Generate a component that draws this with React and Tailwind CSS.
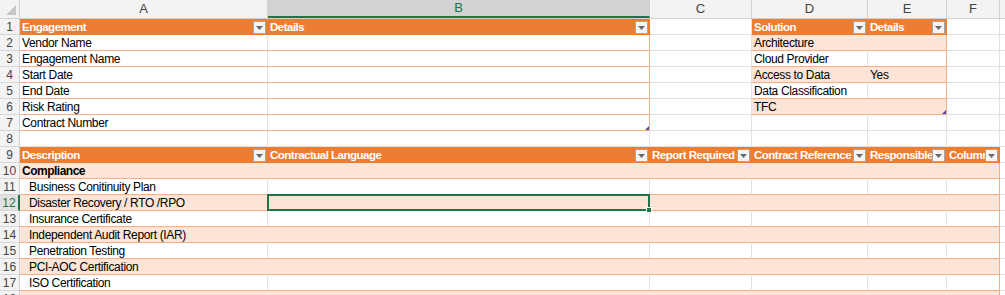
import React from "react";

const widths = ["w-[248px]", "w-[382px]", "w-[102px]", "w-[116px]", "w-[79px]", "w-[53px]"];
const letters = ["A", "B", "C", "D", "E", "F"];

const plain = { fill: "bg-white", right: "border-r-[#e1e1e1]", bottom: "border-b-[#e1e1e1]" };

const head = (text) => ({
  text,
  head: true,
  fill: "bg-[#ed7d31]",
  right: "border-r-[#ed7d31]",
  bottom: "border-b-[#ed7d31]",
});

const band = (on, last, text, extra = {}) => ({
  text,
  fill: on ? "bg-[#fce4d6]" : "bg-white",
  right: last ? "border-r-[#f4b084]" : on ? "border-r-[#fce4d6]" : "border-r-[#e1e1e1]",
  bottom: "border-b-[#f4b084]",
  ...extra,
});

const engagement = ["Vendor Name", "Engagement Name", "Start Date", "End Date", "Risk Rating", "Contract Number"];
const solution = [["Architecture", ""], ["Cloud Provider", ""], ["Access to Data", "Yes"], ["Data Classification", ""], ["TFC", ""]];
const items = [
  "Business Conitinuity Plan",
  "Disaster Recovery / RTO /RPO",
  "Insurance Certificate",
  "Independent Audit Report (IAR)",
  "Penetration Testing",
  "PCI-AOC Certification",
  "ISO Certification",
  "",
];

function buildRows() {
  const rows = [];
  rows.push([head("Engagement"), head("Details"), plain, head("Solution"), head("Details"), plain]);
  engagement.forEach((t, i) => {
    const s = solution[i];
    const on = i % 2 === 0;
    rows.push([
      band(false, false, t),
      band(false, true, "", i === 5 ? { grip: true } : {}),
      plain,
      s ? band(on, false, s[0]) : plain,
      s ? band(on, true, s[1], i === 4 ? { grip: true } : {}) : plain,
      plain,
    ]);
  });
  rows.push([plain, plain, plain, plain, plain, plain]);
  rows.push(["Description", "Contractual Language", "Report Required", "Contract Reference", "Responsible", "Column1"].map(head));
  rows.push([0, 1, 2, 3, 4, 5].map((c) => band(true, c === 5, c === 0 ? "Compliance" : "", { bold: true })));
  items.forEach((t, i) => {
    const on = i % 2 === 1;
    rows.push([0, 1, 2, 3, 4, 5].map((c) => band(on, c === 5, c === 0 ? t : "", { indent: true, selected: i === 1 && c === 1 })));
  });
  return rows;
}

const Dropdown = () => (
  <span className="absolute right-[1px] top-[2px] w-[13px] h-[13px] bg-[#f4f4f4] border border-[#a6a6a6] flex items-center justify-center">
    <svg width="7" height="4" viewBox="0 0 7 4">
      <path d="M0 0h7L3.5 4z" fill="#6a6a6a" />
    </svg>
  </span>
);

const Cell = ({ cell, col }) => (
  <div className={`${widths[col]} h-4 shrink-0 relative box-border border-r border-b ${cell.fill} ${cell.right} ${cell.bottom}`}>
    <div
      className={`h-[15px] overflow-hidden whitespace-nowrap leading-[16px] ${
        cell.head ? "text-white font-bold text-[11.5px] tracking-[-0.5px]" : cell.bold ? "text-black font-bold tracking-[-0.5px]" : "text-black tracking-[-0.35px]"
      } ${cell.indent ? "pl-[9px]" : "pl-[2px]"}`}
    >
      {cell.text}
    </div>
    {cell.head && <Dropdown />}
    {cell.grip && (
      <svg className="absolute right-0 bottom-0" width="4" height="4" viewBox="0 0 4 4">
        <path d="M4 0V4H0z" fill="#4a4ab0" />
      </svg>
    )}
    {cell.selected && (
      <span className="absolute -left-px -top-px -right-px -bottom-px border-2 border-[#217346] z-10">
        <span className="absolute -right-[4px] -bottom-[4px] w-[6px] h-[6px] bg-[#217346] border border-white" />
      </span>
    )}
  </div>
);

export default function App() {
  const rows = buildRows();
  return (
    <div className="w-[1005px] h-[295px] overflow-hidden bg-white text-[12px] font-['Liberation_Sans',sans-serif]">
      <div className="flex h-[18px] bg-[#f3f3f3] border-b border-[#d0d0d0] box-content text-[#444] text-[13px]">
        <div className="w-5 h-[18px] shrink-0 border-r border-[#d0d0d0] relative">
          <svg className="absolute right-[3px] bottom-[3px]" width="10" height="10" viewBox="0 0 10 10">
            <path d="M10 0V10H0z" fill="#c6c6c6" />
          </svg>
        </div>
        {letters.map((l, i) => (
          <div
            key={l}
            className={`${widths[i]} shrink-0 h-[18px] box-border border-r border-[#d0d0d0] flex items-center justify-center ${
              i === 1 ? "bg-[#d2d2d2] border-b-2 border-b-[#217346] text-[#217346]" : ""
            }`}
          >
            {l}
          </div>
        ))}
        <div className="flex-1" />
      </div>
      {rows.map((cells, r) => (
        <div key={r} className="flex h-4">
          <div
            className={`w-5 h-4 shrink-0 box-border border-b border-[#d8d8d8] flex items-center justify-center text-[12px] ${
              r === 11 ? "bg-[#e1e1e1] text-[#217346] border-r-2 border-r-[#217346]" : "bg-[#f3f3f3] text-[#444] border-r border-r-[#d0d0d0]"
            }`}
          >
            {r + 1}
          </div>
          {cells.map((c, i) => (
            <Cell key={i} cell={c} col={i} />
          ))}
          <div className="flex-1 h-4 box-border border-b border-[#e1e1e1]" />
        </div>
      ))}
    </div>
  );
}
